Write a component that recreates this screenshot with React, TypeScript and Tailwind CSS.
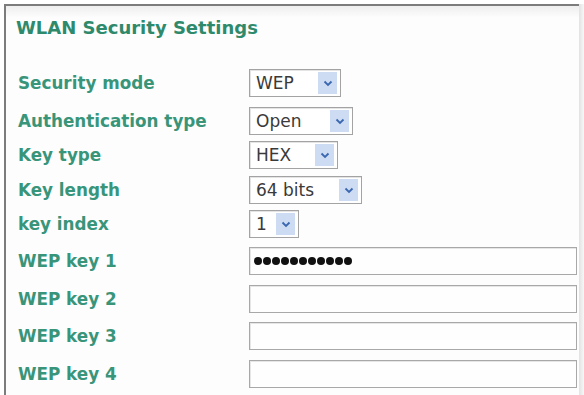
import * as React from "react"

const font = { fontFamily: '"DejaVu Sans", Verdana, sans-serif' }

type Row = {
  label: string
  kind: "select" | "text"
  value?: string
  width?: string
  gap: string
  dots?: number
}

const rows: Row[] = [
  { label: "Security mode", kind: "select", value: "WEP", width: "w-[92px]", gap: "mt-0" },
  { label: "Authentication type", kind: "select", value: "Open", width: "w-[104px]", gap: "mt-[10px]" },
  { label: "Key type", kind: "select", value: "HEX", width: "w-[89px]", gap: "mt-[6px]" },
  { label: "Key length", kind: "select", value: "64 bits", width: "w-[113px]", gap: "mt-[7px]" },
  { label: "key index", kind: "select", value: "1", width: "w-[50px]", gap: "mt-[6px]" },
  { label: "WEP key 1", kind: "text", dots: 11, gap: "mt-[9px]" },
  { label: "WEP key 2", kind: "text", gap: "mt-[10px]" },
  { label: "WEP key 3", kind: "text", gap: "mt-[9px]" },
  { label: "WEP key 4", kind: "text", gap: "mt-[10px]" },
]

function Chevron() {
  return (
    <svg width="10" height="7" viewBox="0 0 10 7">
      <path d="M1.5 1.5 L5 5 L8.5 1.5" fill="none" stroke="#3a68b0" strokeWidth="1.8" />
    </svg>
  )
}

function Select({ value, width }: { value: string; width: string }) {
  return (
    <div className={`${width} h-[28px] border border-[#a3a3a3] bg-white flex items-center justify-between pl-[6px] pr-[3px] shadow-[inset_1px_1px_0_#e4e4e4]`}>
      <span className="text-[17px] text-[#3a3a3a] leading-none">{value}</span>
      <span className="w-[19px] h-[22px] bg-[#cddbf3] flex items-center justify-center">
        <Chevron />
      </span>
    </div>
  )
}

function TextBox({ dots }: { dots?: number }) {
  return (
    <div className="w-[328px] h-[28px] border border-[#a8a8a8] bg-[#fefefe] flex items-center pl-[4px] gap-[1.5px] shadow-[inset_1px_1px_0_#e6e6e6]">
      {Array.from({ length: dots ?? 0 }).map((_, i) => (
        <span key={i} className="w-[7.5px] h-[7.5px] rounded-full bg-[#111]" />
      ))}
    </div>
  )
}

export default function App() {
  return (
    <div className="w-[584px] h-[395px] bg-white overflow-hidden pt-[4px] pl-[4px]" style={font}>
      <div className="flex h-full">
        <div className="flex-1 h-full border-t-2 border-l-2 border-[#7c7c7c] bg-[#fdfdfd]">
          <div className="h-[11px] bg-gradient-to-b from-[#eeeeee] to-[#fcfcfc]" />
          <div className="pl-[10px] text-[18px] font-bold text-[#2f8a6c] leading-[22px]">
            WLAN Security Settings
          </div>
          <div className="flex flex-col pl-[12px] pt-[30px]">
            {rows.map((r) => (
              <div key={r.label} className={`flex items-center ${r.gap}`}>
                <div className="w-[231px] text-[16.8px] font-bold text-[#39957a] leading-none">
                  {r.label}
                </div>
                {r.kind === "select" ? (
                  <Select value={r.value ?? ""} width={r.width ?? "w-[90px]"} />
                ) : (
                  <TextBox dots={r.dots} />
                )}
              </div>
            ))}
          </div>
        </div>
        <div className="w-[5px] h-full bg-gradient-to-r from-[#e2e2e2] to-[#f7f7f7]" />
      </div>
    </div>
  )
}
